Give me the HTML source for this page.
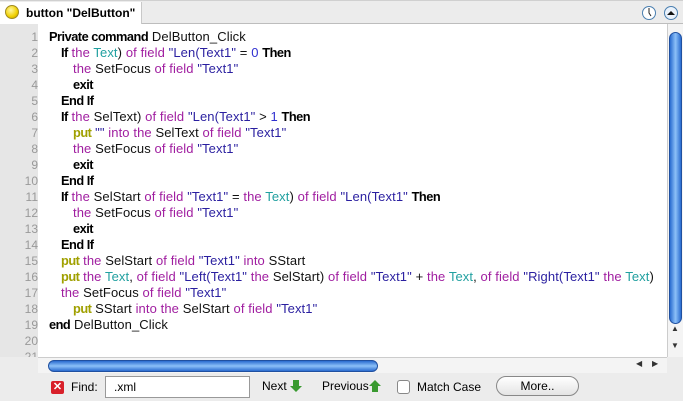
<!DOCTYPE html>
<html><head><meta charset="utf-8"><style>
*{margin:0;padding:0;box-sizing:border-box}
body{width:683px;height:401px;background:#ececec;font-family:"Liberation Sans",sans-serif;position:relative;overflow:hidden}
.tabbar{position:absolute;left:0;top:0;width:683px;height:24px;background:#ececec;border-bottom:1px solid #bdbdbd;border-top:1px solid #d0d0d0}
.tab{position:absolute;left:0;top:1px;width:142px;height:23px;background:#fff;border-right:1px solid #c8c8c8;font-size:12px;font-weight:bold;padding:4px 0 0 26px}
.dot{position:absolute;left:5px;top:3px;width:14px;height:14px;border-radius:50%;background:radial-gradient(circle at 40% 35%,#fff6a0,#f0d000 60%,#b09000);border:1px solid #a08a20}
.editor{position:absolute;left:0;top:24px;width:667px;height:333px;background:#fff;overflow:hidden}
.gutter{position:absolute;left:0;top:0;width:38px;height:333px;background:#e6e6e6}
.ln{position:absolute;left:0;width:38px;text-align:right;color:#999;font-size:12px}
.code{position:absolute;white-space:pre;font-size:13px;color:#111;letter-spacing:0.1px}
b{color:#000;font-size:12.8px;letter-spacing:-0.5px}
.p{color:#a01ea0}.t{color:#21a0a0}.s{color:#2a1fa0}.n{color:#3030d0}.k{color:#a0a000;font-weight:bold;font-size:12.8px;letter-spacing:-0.5px}
.vs{position:absolute;left:667px;top:24px;width:16px;height:333px;background:#f4f4f4;border-left:1px solid #ccc}
.vthumb{position:absolute;left:1px;top:8px;width:13px;height:292px;border-radius:7px;background:linear-gradient(90deg,#2a6cd0,#8cc0f8 50%,#2a6cd0);border:1px solid #2050a0}
.hs{position:absolute;left:38px;top:357px;width:629px;height:16px;background:#f4f4f4;border-top:1px solid #ccc}
.hthumb{position:absolute;left:10px;top:2px;width:330px;height:12px;border-radius:6px;background:linear-gradient(#2a6cd0,#8cc0f8 50%,#2a6cd0);border:1px solid #2050a0}
.find{position:absolute;top:373px;left:0;width:683px;height:28px;font-size:12px}
</style></head><body>
<div class="tabbar"><div class="tab"><div class="dot"></div>button "DelButton"</div>
<svg style="position:absolute;left:642px;top:4px" width="38" height="16"><circle cx="7" cy="8" r="6.5" fill="#fff" stroke="#4a7fb0"/><path d="M7 3v5l2 3" stroke="#222" fill="none"/><circle cx="29" cy="8" r="6.5" fill="#eaf2fb" stroke="#4a7fb0"/><path d="M25 10l4-4 4 4z" fill="#111"/></svg></div>
<div class="editor"><div class="gutter"></div>
<div class="ln" style="top:6px">1</div><div class="ln" style="top:22px">2</div><div class="ln" style="top:38px">3</div><div class="ln" style="top:54px">4</div><div class="ln" style="top:70px">5</div><div class="ln" style="top:86px">6</div><div class="ln" style="top:102px">7</div><div class="ln" style="top:118px">8</div><div class="ln" style="top:134px">9</div><div class="ln" style="top:150px">10</div><div class="ln" style="top:166px">11</div><div class="ln" style="top:182px">12</div><div class="ln" style="top:198px">13</div><div class="ln" style="top:214px">14</div><div class="ln" style="top:230px">15</div><div class="ln" style="top:246px">16</div><div class="ln" style="top:262px">17</div><div class="ln" style="top:278px">18</div><div class="ln" style="top:294px">19</div><div class="ln" style="top:310px">20</div><div class="ln" style="top:326px">21</div>
<div class="code" style="left:49px;top:5px"><b>Private command</b> DelButton_Click</div>
<div class="code" style="left:61px;top:21px"><b>If</b> <span class="p">the</span> <span class="t">Text</span>) <span class="p">of field</span> <span class="s">"Len(Text1"</span> = <span class="n">0</span> <b>Then</b></div>
<div class="code" style="left:73px;top:37px"><span class="p">the</span> SetFocus <span class="p">of field</span> <span class="s">"Text1"</span></div>
<div class="code" style="left:73px;top:53px"><b>exit</b></div>
<div class="code" style="left:61px;top:69px"><b>End If</b></div>
<div class="code" style="left:61px;top:85px"><b>If</b> <span class="p">the</span> SelText) <span class="p">of field</span> <span class="s">"Len(Text1"</span> &gt; <span class="n">1</span> <b>Then</b></div>
<div class="code" style="left:73px;top:101px"><span class="k">put</span> <span class="s">""</span> <span class="p">into the</span> SelText <span class="p">of field</span> <span class="s">"Text1"</span></div>
<div class="code" style="left:73px;top:117px"><span class="p">the</span> SetFocus <span class="p">of field</span> <span class="s">"Text1"</span></div>
<div class="code" style="left:73px;top:133px"><b>exit</b></div>
<div class="code" style="left:61px;top:149px"><b>End If</b></div>
<div class="code" style="left:61px;top:165px"><b>If</b> <span class="p">the</span> SelStart <span class="p">of field</span> <span class="s">"Text1"</span> = <span class="p">the</span> <span class="t">Text</span>) <span class="p">of field</span> <span class="s">"Len(Text1"</span> <b>Then</b></div>
<div class="code" style="left:73px;top:181px"><span class="p">the</span> SetFocus <span class="p">of field</span> <span class="s">"Text1"</span></div>
<div class="code" style="left:73px;top:197px"><b>exit</b></div>
<div class="code" style="left:61px;top:213px"><b>End If</b></div>
<div class="code" style="left:61px;top:229px"><span class="k">put</span> <span class="p">the</span> SelStart <span class="p">of field</span> <span class="s">"Text1"</span> <span class="p">into</span> SStart</div>
<div class="code" style="left:61px;top:245px"><span class="k">put</span> <span class="p">the</span> <span class="t">Text</span>, <span class="p">of field</span> <span class="s">"Left(Text1"</span> <span class="p">the</span> SelStart) <span class="p">of field</span> <span class="s">"Text1"</span> + <span class="p">the</span> <span class="t">Text</span>, <span class="p">of field</span> <span class="s">"Right(Text1"</span> <span class="p">the</span> <span class="t">Text</span>)</div>
<div class="code" style="left:61px;top:261px"><span class="p">the</span> SetFocus <span class="p">of field</span> <span class="s">"Text1"</span></div>
<div class="code" style="left:73px;top:277px"><span class="k">put</span> SStart <span class="p">into the</span> SelStart <span class="p">of field</span> <span class="s">"Text1"</span></div>
<div class="code" style="left:49px;top:293px"><b>end</b> DelButton_Click</div>
</div>
<div class="vs"><div class="vthumb"></div><div style="position:absolute;left:3px;top:300px;font-size:8px;color:#333">▲</div><div style="position:absolute;left:3px;top:317px;font-size:8px;color:#333">▼</div></div>
<div class="hs"><div class="hthumb"></div><div style="position:absolute;left:598px;top:1px;font-size:8px;color:#333">◀</div><div style="position:absolute;left:614px;top:1px;font-size:8px;color:#333">▶</div></div>
<div style="position:absolute;left:0;top:357px;width:38px;height:16px;background:#ececec"></div>
<div class="find">
<div style="position:absolute;left:51px;top:8px;width:13px;height:13px;background:#d8202a;color:#fff;font-size:11px;font-weight:bold;text-align:center;line-height:13px;border-radius:2px">✕</div>
<div style="position:absolute;left:71px;top:7px">Find:</div>
<div style="position:absolute;left:105px;top:3px;width:145px;height:22px;background:#fff;border:1px solid #999;padding:3px 0 0 8px">.xml</div>
<div style="position:absolute;left:262px;top:6px">Next</div>
<svg style="position:absolute;left:290px;top:6px" width="12" height="14"><path d="M3 1h6v6h3l-6 6-6-6h3z" fill="#3a9a30"/></svg>
<div style="position:absolute;left:322px;top:6px">Previous</div>
<svg style="position:absolute;left:369px;top:6px" width="12" height="14"><path d="M3 13h6V7h3L6 1 0 7h3z" fill="#3a9a30"/></svg>
<div style="position:absolute;left:397px;top:7px;width:13px;height:14px;background:#fff;border:1px solid #888;border-radius:3px"></div>
<div style="position:absolute;left:417px;top:7px">Match Case</div>
<div style="position:absolute;left:496px;top:3px;width:83px;height:20px;border:1px solid #888;border-radius:10px;background:linear-gradient(#fff,#e4e4e4);text-align:center;padding-top:2px">More..</div>
</div>
</body></html>
